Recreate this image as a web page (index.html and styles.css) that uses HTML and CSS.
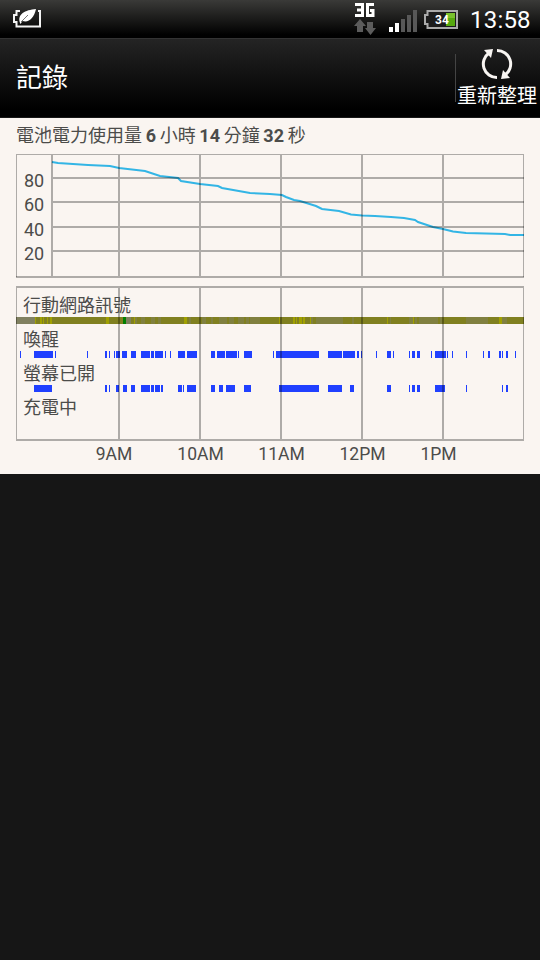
FILE: index.html
```
<!DOCTYPE html>
<html lang="zh-Hant">

<head>
    <meta charset="UTF-8">
    <meta name="viewport" content="width=device-width, initial-scale=1.0">
    <title>記錄</title>
    <link rel="stylesheet" href="styles.css">
</head>

<body>
    <header class="status-bar">
        <svg class="power-saver" width="30" height="20" viewBox="0 0 30 20">
            <path d="M8 2H4.500V6H2V13H4.500V17.500H28V2H26" fill="none" stroke="#f4f4f4" stroke-width="2" />
            <path d="M8 14C5 5 13 1 24 0C22 9 17 14 10.500 12L8.500 15Z" fill="#fff" />
            <path d="M9 13L16 6" stroke="#777" stroke-width="1" />
        </svg>
        <div class="status-icons">
            <div class="network">
                <svg width="22" height="14" viewBox="0 0 22 14">
                    <path d="M1 1.500H8.500V12.500H1M3 7H8.500" fill="none" stroke="#fff" stroke-width="3" />
                    <path d="M20 1.500H13.500V12.500H19V7.500H16" fill="none" stroke="#fff" stroke-width="3" />
                </svg>
                <svg width="22" height="17" viewBox="0 0 22 17">
                    <path d="M6 0L12 7H9V13H3V7H0ZM13 3H19V9H22L16.500 16L11 9H13Z" fill="#5c5c5c" />
                </svg>
            </div>
            <svg class="signal" width="28" height="22" viewBox="0 0 28 22">
                <path d="M0 17h4v5H0zM6 13h4v9H6z" fill="#fff" />
                <path d="M12 9h4v13h-4zM18 5h4v17h-4zM24 0h4v22h-4z" fill="#585858" />
            </svg>
            <svg class="battery" width="34" height="20" viewBox="0 0 34 20">
                <path d="M3.500 1H33V18H3.500V14H1V5H3.500Z" fill="#1c1c1c" stroke="#aaa" stroke-width="2" />
                <path d="M22 3H31V16H22Z" fill="#55a80e" />
                <path d="M22 3H31V8H22Z" fill="#78c02c" />
                <text x="18" y="14">34</text>
            </svg>
            <span class="clock">13:58</span>
        </div>
    </header>

    <div class="title-bar">
        <h1>記錄</h1>
        <button class="refresh-button">
            <svg width="32" height="32" viewBox="0 0 32 32">
                <path d="M16 29.500A13.500 13.500 0 0 1 8 5M16 2.500A13.500 13.500 0 0 1 24 27" fill="none" stroke="#f8f5f2" stroke-width="3" />
                <path d="M3 2L12 1L10 10ZM29 30L20 31L22 22Z" fill="#f8f5f2" />
            </svg>
            <span>重新整理</span>
        </button>
    </div>

    <main class="history">
        <p class="summary">電池電力使用量 <b>6</b> 小時 <b>14</b> 分鐘 <b>32</b> 秒</p>

        <!-- Battery level -->
        <svg class="chart" width="508" height="124" viewBox="16 154 508 124">
            <polyline class="level" points="52,162 58,163 88,165 110,166 119,168 145,171 160,176 178,178 181,181 200,184 218,186 222,188 250,193 270,194 282,195 286,197 294,200 300,201 316,206 322,209 339,211 351,214.500 362,215.500 375,216 391,217 404,218 415,220 418,222 433,227 443,229 453,231.500 466,233 486,233.500 505,234 510,235 524,235" />
            <path class="thin" d="M16 154.500H524M16.500 155V277M523.500 155V277" />
            <path class="grid" d="M52 178H524M52 202H524M52 227H524M52 251H524M16 277H524M52 155V276M119 155V276M200 155V276M281 155V276M362 155V276M443 155V276" />
            <g class="label">
                <text x="24" y="187">80</text>
                <text x="24" y="211">60</text>
                <text x="24" y="236">40</text>
                <text x="24" y="260">20</text>
            </g>
        </svg>

        <!-- Signal, wake, screen and charging history -->
        <svg class="chart timeline" width="508" height="182" viewBox="16 286 508 182">
            <g class="bars">
                <path stroke="#808020" d="M16 320.500H524" />
                <path stroke="#808060" d="M16 320.500H35" />
                <path stroke="#808040" d="M135 320.500h2M141 320.500h4M151 320.500h4M158 320.500h3M189 320.500h2M202 320.500h4M211 320.500h2M219 320.500h8M229 320.500h5M238 320.500h6M246 320.500h3M250 320.500h10M311 320.500h2M316 320.500h27M352 320.500h2M390 320.500h1M409 320.500h4M415 320.500h2M419 320.500h19M440 320.500h2M466 320.500h22M502 320.500h5" />
                <path stroke="#808060" d="M126 320.500h5" />
                <path stroke="#a0a000" d="M35 320.500h1M40 320.500h2M43 320.500h1M47 320.500h1M50 320.500h2M106 320.500h3M134 320.500h1M184 320.500h3M279 320.500h1M293 320.500h2M296 320.500h1M299 320.500h3M303 320.500h2M310 320.500h1M387 320.500h1M413 320.500h1M499 320.500h3" />
                <path stroke="#008000" d="M123 320.500h3" />
                <path class="on" d="M20 354.500h1M34 354.500h19M55 354.500h1M87 354.500h1M105 354.500h2M109 354.500h1M114 354.500h1M116 354.500h4M122 354.500h5M131 354.500h5M141 354.500h9M151 354.500h3M155 354.500h8M165 354.500h1M170 354.500h1M178 354.500h7M187 354.500h10M211 354.500h4M217 354.500h8M226 354.500h11M238 354.500h1M244 354.500h8M273 354.500h1M276 354.500h43M328 354.500h14M343 354.500h12M357 354.500h2M361 354.500h1M376 354.500h1M387 354.500h4M393 354.500h1M409 354.500h1M412 354.500h3M417 354.500h3M431 354.500h1M435 354.500h11M447 354.500h1M452 354.500h1M466 354.500h1M483 354.500h1M488 354.500h2M499 354.500h2M502 354.500h1M506 354.500h2M515 354.500h1" />
                <path class="on" d="M34 388.500h18M105 388.500h2M109 388.500h1M116 388.500h3M123 388.500h4M131 388.500h4M141 388.500h9M151 388.500h3M155 388.500h5M161 388.500h2M178 388.500h4M183 388.500h1M187 388.500h9M211 388.500h4M219 388.500h4M226 388.500h9M244 388.500h7M279 388.500h40M328 388.500h14M350 388.500h4M387 388.500h4M409 388.500h1M412 388.500h3M417 388.500h3M435 388.500h10M466 388.500h1M502 388.500h1M506 388.500h2" />
            </g>
            <path class="thin" d="M16.500 288V439M523.500 288V439" />
            <path class="grid" d="M16 287H524M16 440H524M119 288V439M200 288V439M281 288V439M362 288V439M443 288V439" />
            <g class="label">
                <text x="23" y="312">行動網路訊號</text>
                <text x="23" y="346">喚醒</text>
                <text x="23" y="380">螢幕已開</text>
                <text x="23" y="414">充電中</text>
            </g>
            <g class="label hours">
                <text x="114" y="460">9AM</text>
                <text x="200.500" y="460">10AM</text>
                <text x="281.500" y="460">11AM</text>
                <text x="362.500" y="460">12PM</text>
                <text x="438.500" y="460">1PM</text>
            </g>
        </svg>
    </main>
</body>

</html>
```
FILE: styles.css
```
* {
    margin: 0;
    padding: 0;
    box-sizing: border-box;
}

body {
    min-height: 960px;
    background-color: #161616;
    color: #fff;
    font-family: Roboto, "Noto Sans CJK TC", sans-serif;
    overflow: hidden;
}

svg {
    display: block;
    flex-shrink: 0;
}
/* Status bar */

.status-bar {
    height: 38px;
    padding: 0 10px 0 12px;
    display: flex;
    justify-content: space-between;
    align-items: flex-start;
    background: linear-gradient(#3a3a38, #000 92%);
}

.power-saver {
    margin-top: 9px;
}

.status-icons {
    display: flex;
}

.network {
    display: flex;
    flex-direction: column;
    gap: 2px;
    padding-top: 3px;
    margin-right: 13px;
}

.signal {
    margin: 10px 7px 0 0;
}

.battery {
    margin: 10px 12px 0 0;
}

.battery text {
    fill: #fff;
    font-size: 12px;
    font-weight: bold;
    text-anchor: middle;
}

.clock {
    width: 60px;
    font-size: 24px;
    line-height: 40px;
    letter-spacing: 0.2px;
    white-space: nowrap;
}
/* Title bar */

.title-bar {
    height: 80px;
    padding-left: 16px;
    display: flex;
    justify-content: space-between;
    align-items: flex-start;
    border-top: 1px solid #333;
    border-bottom: 1px solid #181818;
    background: linear-gradient(#242424, #000 90%);
}

.title-bar h1 {
    font-size: 26px;
    font-weight: normal;
    line-height: 78px;
}

.refresh-button {
    width: 85px;
    height: 48px;
    margin-top: 15px;
    display: flex;
    flex-direction: column;
    align-items: center;
    justify-content: center;
    gap: 4px;
    padding-right: 2px;
    border: none;
    border-left: 1px solid #444;
    background: none;
    color: #fff;
    font-family: inherit;
    font-size: 20px;
    line-height: 24px;
    white-space: nowrap;
}
/* History panel */

.history {
    height: 356px;
    padding: 0 16px;
    background-color: #faf5f1;
    color: #4c4c4a;
}

.summary {
    height: 36px;
    font-size: 18px;
    line-height: 36px;
    word-spacing: -0.8px;
}

.timeline {
    margin-top: 8px;
}

.level {
    fill: none;
    stroke: #33b5e5;
    stroke-width: 2;
}

.thin,
.grid {
    fill: none;
    stroke: #000;
    stroke-opacity: 0.3;
    shape-rendering: crispEdges;
}

.grid {
    stroke-width: 2;
}

.bars {
    stroke-width: 7;
    shape-rendering: crispEdges;
}

.on {
    stroke: #2040ff;
}

.label {
    fill: #4c4c4a;
    font-size: 18px;
}

.hours {
    font-size: 17.5px;
    text-anchor: middle;
}
```
